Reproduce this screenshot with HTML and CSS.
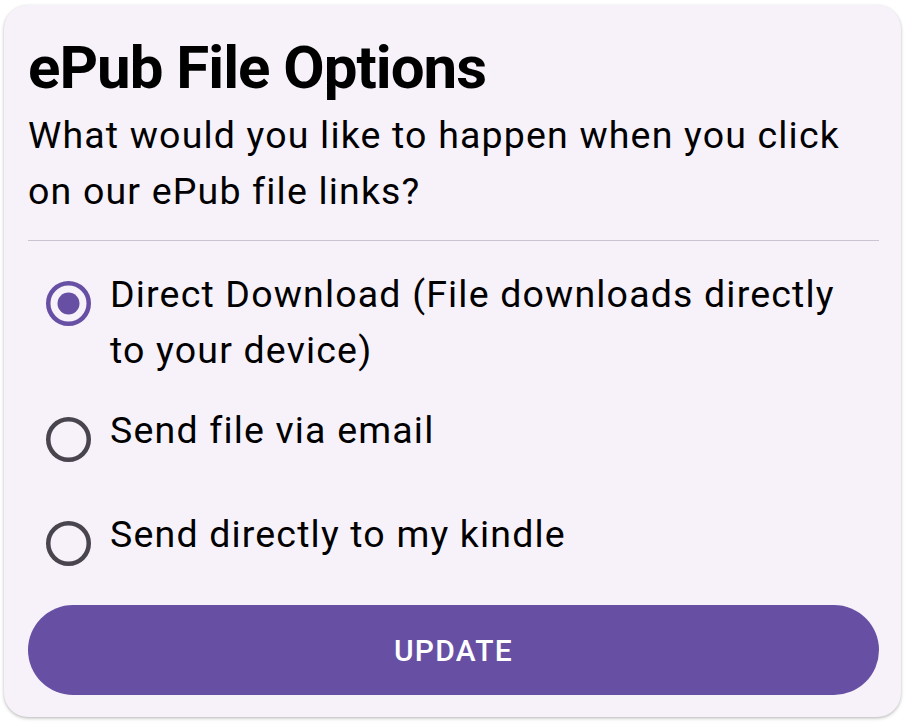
FILE: index.html
```html
<!DOCTYPE html>
<html>
<head>
<meta charset="utf-8">
<link rel="stylesheet" href="styles.css">
</head>
<body>
<div class="card">
  <h1 class="title">ePub File Options</h1>
  <p class="subtitle">What would you like to happen when you click on our ePub file links?</p>
  <div class="divider"></div>
  <div class="options">
    <label class="option">
      <svg class="radio" width="45" height="45" viewBox="0 0 45 45"><circle cx="22.5" cy="22.5" r="20.25" fill="none" stroke="#6750a4" stroke-width="4.5"/><circle cx="22.5" cy="22.5" r="11" fill="#6750a4"/></svg>
      <span class="label">Direct Download (File downloads directly to your device)</span>
    </label>
    <label class="option">
      <svg class="radio" width="45" height="45" viewBox="0 0 45 45"><circle cx="22.5" cy="22.5" r="20.25" fill="none" stroke="#49454f" stroke-width="4.5"/></svg>
      <span class="label">Send file via email</span>
    </label>
    <label class="option">
      <svg class="radio" width="45" height="45" viewBox="0 0 45 45"><circle cx="22.5" cy="22.5" r="20.25" fill="none" stroke="#49454f" stroke-width="4.5"/></svg>
      <span class="label">Send directly to my kindle</span>
    </label>
  </div>
  <button class="update">UPDATE</button>
</div>
</body>
</html>
```

FILE: styles.css
```css
html, body {
  margin: 0;
  padding: 0;
  background: #ffffff;
}
body {
  padding: 5px 6px 6px 4px;
  font-family: Roboto, "Noto Sans", sans-serif;
}
.card {
  box-sizing: border-box;
  width: 897px;
  height: 712px;
  background: #f7f2fa;
  border-radius: 24px;
  box-shadow: 0 1px 3px rgba(0,0,0,0.22), 0 2px 4px rgba(0,0,0,0.08);
  padding: 0 22px 0 24px;
  display: flex;
  flex-direction: column;
}
.title {
  margin: 28px 0 0 0;
  font-size: 60px;
  font-weight: 700;
  line-height: 70px;
  letter-spacing: -1px;
  color: #000;
}
.subtitle {
  margin: 4px 0 0 0;
  font-size: 37.5px;
  line-height: 56px;
  letter-spacing: 0.03125em;
  color: #000;
  font-weight: 400;
}
.divider {
  height: 1px;
  background: #cac4d0;
  margin-top: 21px;
}
.options {
  display: flex;
  flex-direction: column;
  margin-top: 25px;
}
.option {
  display: flex;
  align-items: flex-start;
  gap: 19px;
  padding-left: 18px;
  min-height: 80px;
}
.option + .option {
  margin-top: 24px;
}
.radio {
  flex: none;
  display: block;
  margin-top: 15px;
}
.label {
  font-size: 37.5px;
  line-height: 56px;
  letter-spacing: 0.03125em;
  color: #000;
}
.update {
  margin-top: auto;
  margin-bottom: 22px;
  height: 90px;
  border: none;
  border-radius: 45px;
  background: #6750a4;
  color: #fff;
  font-family: Roboto, "Noto Sans", sans-serif;
  font-size: 30px;
  font-weight: 500;
  letter-spacing: 1.3px;
}
```
